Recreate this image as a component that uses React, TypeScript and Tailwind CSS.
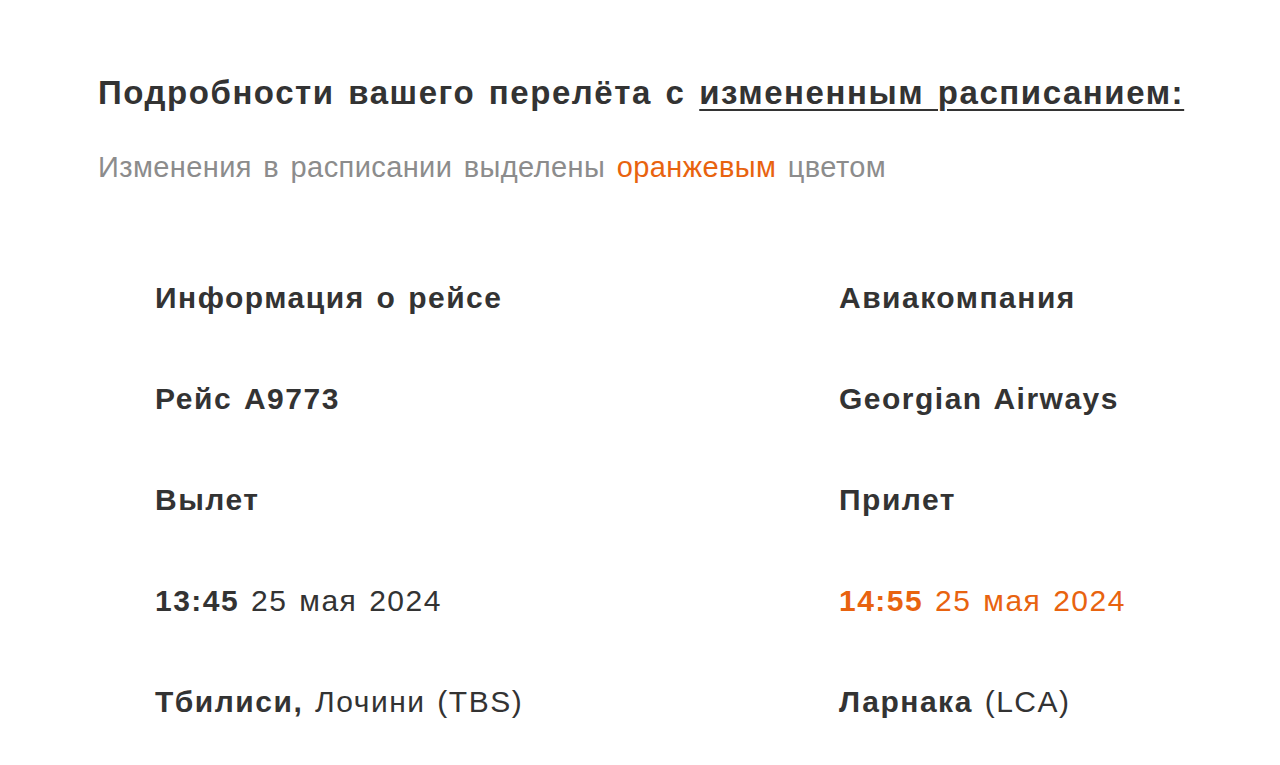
const rows = [
  { left: <b>Информация о рейсе</b>, right: <b>Авиакомпания</b> },
  { left: <b>Рейс A9773</b>, right: <b>Georgian Airways</b> },
  { left: <b>Вылет</b>, right: <b>Прилет</b> },
  {
    left: (
      <>
        <b>13:45</b> 25 мая 2024
      </>
    ),
    right: (
      <span className="text-[#e8630f]">
        <b>14:55</b> 25 мая 2024
      </span>
    ),
  },
  {
    left: (
      <>
        <b>Тбилиси,</b> Лочини (TBS)
      </>
    ),
    right: (
      <>
        <b>Ларнака</b> (LCA)
      </>
    ),
  },
];

export default function App() {
  return (
    <div
      className="w-[1280px] h-[765px] bg-white text-[#333333] overflow-hidden"
      style={{ fontFamily: '"Liberation Sans", Arial, sans-serif' }}
    >
      <div className="pl-[98px] pt-[74px]">
        <h1 className="text-[33px] leading-[38px] font-bold tracking-[1.55px] [word-spacing:3px] whitespace-nowrap">
          Подробности вашего перелёта с <span className="underline underline-offset-[5px] decoration-2">измененным расписанием:</span>
        </h1>
        <p className="mt-[39px] text-[29px] leading-[32px] text-[#8c8c8c] tracking-[0.4px] [word-spacing:3px] whitespace-nowrap">
          Изменения в расписании выделены <span className="text-[#e8630f]">оранжевым</span> цветом
        </p>
      </div>

      <div className="pl-[155px] pt-[99px] grid grid-cols-[684px_1fr] gap-y-[69px] text-[30px] leading-[32px] tracking-[1.5px] [word-spacing:2px] whitespace-nowrap">
        {rows.map((r, i) => (
          <div key={i} className="contents">
            <div>{r.left}</div>
            <div>{r.right}</div>
          </div>
        ))}
      </div>
    </div>
  );
}
